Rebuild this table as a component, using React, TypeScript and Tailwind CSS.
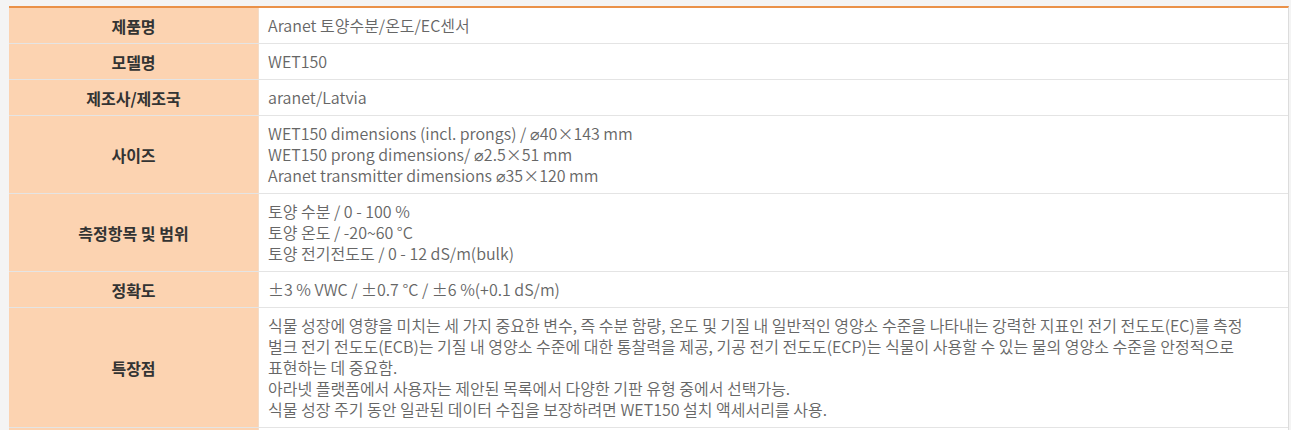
const rows: { label: string; lines: string[] }[] = [
  { label: '제품명', lines: ['Aranet 토양수분/온도/EC센서'] },
  { label: '모델명', lines: ['WET150'] },
  { label: '제조사/제조국', lines: ['aranet/Latvia'] },
  {
    label: '사이즈',
    lines: [
      'WET150 dimensions (incl. prongs) / ⌀40×143 mm',
      'WET150 prong dimensions/ ⌀2.5×51 mm',
      'Aranet transmitter dimensions ⌀35×120 mm',
    ],
  },
  {
    label: '측정항목 및 범위',
    lines: ['토양 수분 / 0 - 100 %', '토양 온도 / -20~60 °C', '토양 전기전도도 / 0 - 12 dS/m(bulk)'],
  },
  { label: '정확도', lines: ['±3 % VWC / ±0.7 °C / ±6 %(+0.1 dS/m)'] },
  {
    label: '특장점',
    lines: [
      '식물 성장에 영향을 미치는 세 가지 중요한 변수, 즉 수분 함량, 온도 및 기질 내 일반적인 영양소 수준을 나타내는 강력한 지표인 전기 전도도(EC)를 측정',
      '벌크 전기 전도도(ECB)는 기질 내 영양소 수준에 대한 통찰력을 제공, 기공 전기 전도도(ECP)는 식물이 사용할 수 있는 물의 영양소 수준을 안정적으로',
      '표현하는 데 중요함.',
      '아라넷 플랫폼에서 사용자는 제안된 목록에서 다양한 기판 유형 중에서 선택가능.',
      '식물 성장 주기 동안 일관된 데이터 수집을 보장하려면 WET150 설치 액세서리를 사용.',
    ],
  },
  { label: '구성품', lines: ['Aranet 토양센서'] },
]

export default function App() {
  return (
    <div
      className="h-[430px] overflow-hidden bg-[#f4f4f4] pl-[9px] pt-[6px]"
      style={{ fontFamily: '"Noto Sans CJK KR", "Noto Sans", sans-serif' }}
    >
      <div className="w-[1280px] border-t-2 border-r border-t-[#ea9148] border-r-[#dcdcdc] bg-white">
        {rows.map((row) => (
          <div key={row.label} className="flex border-b border-[#e4e4e4]">
            <div className="flex w-[250px] shrink-0 items-center justify-center border-r border-[#f3dcc8] bg-[#fcd3b1] text-[16px] font-bold text-[#333]">
              {row.label}
            </div>
            <div className="flex-1 px-[9px] py-[7px] text-[16px] font-[350] leading-[21px] text-[#666]">
              {row.lines.map((line, i) => (
                <p key={i} className="whitespace-nowrap">
                  {line}
                </p>
              ))}
            </div>
          </div>
        ))}
      </div>
    </div>
  )
}
